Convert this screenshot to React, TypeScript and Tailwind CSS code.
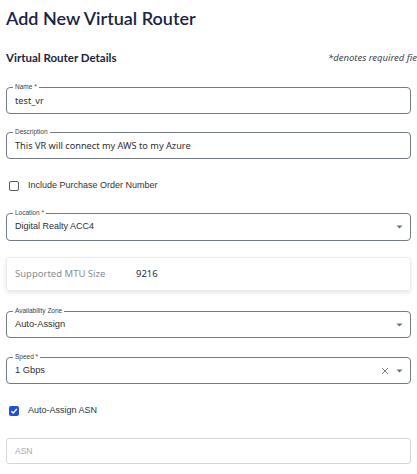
import React from "react";

const Caret = () => (
  <svg width="7" height="4" viewBox="0 0 7 4" className="shrink-0">
    <path d="M0.5 0.5 L3.5 3.5 L6.5 0.5 Z" fill="#6b6f76" />
  </svg>
);

const Clear = () => (
  <svg width="8" height="8" viewBox="0 0 8 8" className="shrink-0">
    <path d="M1 1 L7 7 M7 1 L1 7" stroke="#7a7e86" strokeWidth="1" />
  </svg>
);

type FieldProps = {
  label: string;
  value: string;
  select?: boolean;
  clearable?: boolean;
  font?: string;
  className?: string;
};

const Field = ({ label, value, select, clearable, font, className }: FieldProps) => (
  <div
    className={`relative h-[27px] border border-[#737a88] rounded-[4px] flex items-center pl-[8px] pr-[7px] ${className ?? ""}`}
  >
    <span className="absolute -top-[5px] left-[6px] bg-white px-[2px] text-[6.5px] leading-[8px] text-[#3a3f4a] font-['Liberation_Sans',sans-serif]">
      {label}
    </span>
    <span className={`flex-1 text-[#2b2f36] ${font ?? "font-['Noto_Sans',sans-serif] text-[9.2px]"}`}>
      {value}
    </span>
    {clearable && (
      <span className="mr-[7px] flex items-center">
        <Clear />
      </span>
    )}
    {select && <Caret />}
  </div>
);

const Check = ({ checked, label }: { checked?: boolean; label: string }) => (
  <label className="flex items-center gap-[9px] pl-[3px] h-[14px]">
    {checked ? (
      <span className="w-[10px] h-[10px] rounded-[2px] bg-[#2250d4] flex items-center justify-center">
        <svg width="8" height="8" viewBox="0 0 8 8">
          <path d="M1.3 4.2 L3.2 6 L6.8 2" stroke="white" strokeWidth="1.3" fill="none" />
        </svg>
      </span>
    ) : (
      <span className="w-[10px] h-[10px] rounded-[2px] border-[1.5px] border-[#555a63]" />
    )}
    <span className="text-[9px] text-[#2e323a] font-['Liberation_Sans',sans-serif]">{label}</span>
  </label>
);

const App = () => {
  return (
    <div className="w-[417px] h-[474px] bg-white overflow-hidden px-[6px]">
      <h1 className="pt-[7px] text-[18px] leading-[22px] font-semibold text-[#1b2443] font-['Lato',sans-serif]">
        Add New Virtual Router
      </h1>

      <div className="mt-[22px] flex items-center justify-between h-[14px] whitespace-nowrap">
        <h2 className="text-[11.5px] font-bold text-[#1d2540] font-['Lato',sans-serif]">
          Virtual Router Details
        </h2>
        <span className="text-[9.5px] italic text-[#3f4450] font-['Noto_Sans',sans-serif] -mr-[14px]">
          *denotes required field
        </span>
      </div>

      <Field label="Name *" value="test_vr" className="mt-[22px]" />
      <Field
        label="Description"
        value="This VR will connect my AWS to my Azure"
        className="mt-[18px]"
      />

      <div className="mt-[20px]">
        <Check label="Include Purchase Order Number" />
      </div>

      <Field
        label="Location *"
        value="Digital Realty ACC4"
        select
        font="font-['Liberation_Sans',sans-serif] text-[9px]"
        className="mt-[20px] h-[28px]"
      />

      <div className="mt-[16px] h-[34px] rounded-[3px] border border-[#ececec] shadow-[0_2px_4px_rgba(0,0,0,0.10)] flex items-center pl-[8px] font-['Noto_Sans',sans-serif] text-[9.5px]">
        <span className="w-[121px] text-[#8a8e96]">Supported MTU Size</span>
        <span className="text-[#2b2f36]">9216</span>
      </div>

      <Field
        label="Availability Zone"
        value="Auto-Assign"
        select
        font="font-['Liberation_Sans',sans-serif] text-[9.3px]"
        className="mt-[20px]"
      />
      <Field
        label="Speed *"
        value="1 Gbps"
        select
        clearable
        font="font-['Liberation_Sans',sans-serif] text-[9.3px]"
        className="mt-[19px]"
      />

      <div className="mt-[20px]">
        <Check checked label="Auto-Assign ASN" />
      </div>

      <div className="mt-[20px] h-[26px] border border-[#d6d6d6] rounded-[3px] flex items-center pl-[8px]">
        <span className="text-[8.5px] text-[#a6a9ae] font-['Liberation_Sans',sans-serif]">ASN</span>
      </div>
    </div>
  );
};

export default App;
